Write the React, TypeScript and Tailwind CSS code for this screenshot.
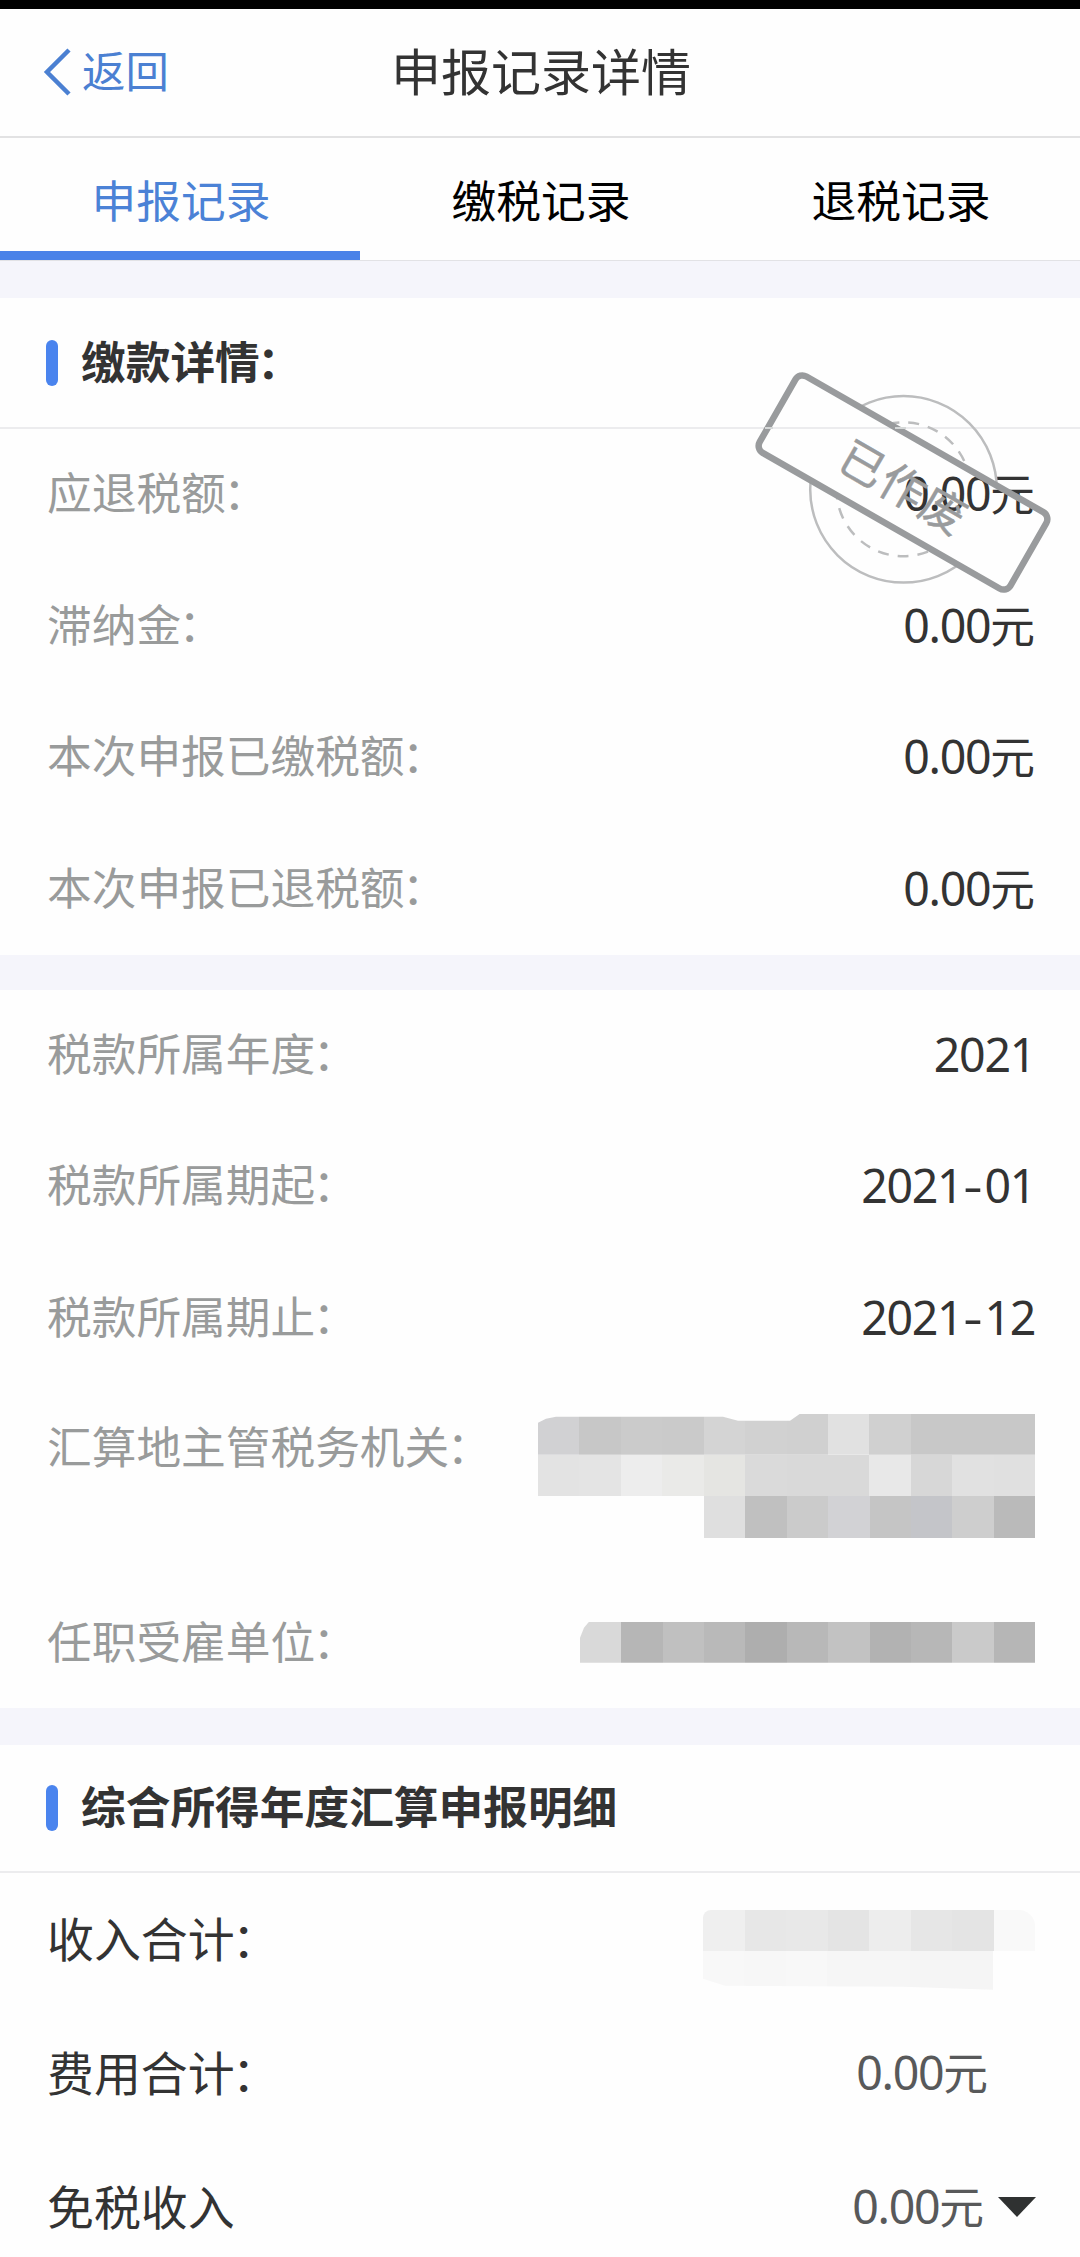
import { FC, ReactNode } from "react";
import clsx from "clsx";

const tabs = ["申报记录", "缴税记录", "退税记录"];

const payRows = ["应退税额：", "滞纳金：", "本次申报已缴税额：", "本次申报已退税额："];

const officeTop = ["#d1d1d3", "#c7c7c7", "#cbcbcb", "#cacaca", "#d4d4d4", "#d1d1d1", "#d0d0d0", "#e1e1e1", "#d0d0d0", "#c8c8c8", "#c8c8c8", "#c8c8c8"];
const officeMid = ["#e3e3e3", "#e4e4e4", "#ededed", "#eaeae8", "#e5e5e2", "#dadada", "#d9d9d9", "#d9d9d9", "#e8e8e8", "#d7d7d7", "#e1e1e1", "#e0e0e0"];
const officeLow = ["#dfdfdf", "#c0c0c0", "#cbcbcb", "#d2d2d5", "#c5c5c5", "#c4c5c9", "#cecece", "#bababa"];
const employer = ["#d9d9d9", "#b6b6b6", "#c0c0c0", "#b9b9b9", "#aeaeae", "#b8b8b8", "#c2c2c2", "#b2b2b2", "#b7b7b7", "#cacaca", "#b6b6b6"];
const incomeTop = ["#efefef", "#e7e7e7", "#e8e8e8", "#e4e4e4", "#ededed", "#e6e6e6", "#e4e4e4", "#f9f9f9"];
const incomeLow = ["#f8f8f8", "#f7f7f7", "#f8f8f8", "#f6f6f6", "#f6f6f6", "#f5f5f5", "#f5f5f5"];

const Mosaic: FC<{ colors: string[]; className?: string }> = ({
  colors,
  className,
}) => (
  <div className={clsx("flex", className)}>
    {colors.map((color, i) => (
      <div key={i} className="flex-1" style={{ backgroundColor: color }} />
    ))}
  </div>
);

// the last character and its colon are set a little tighter
const Label: FC<{ text: string; className?: string }> = ({
  text,
  className = "text-[#999b9b]",
}) => (
  <span className={className}>
    {text.endsWith("：") ? (
      <>
        {text.slice(0, -2)}
        <span className="tracking-[-2.5px]">{text.slice(-2)}</span>
      </>
    ) : (
      text
    )}
  </span>
);

const Digits: FC<{ children: ReactNode }> = ({ children }) => (
  <span className="text-[46.5px] tracking-[-1.3px]">{children}</span>
);

const Amount: FC<{ className?: string }> = ({ className }) => (
  <span className={className}>
    <Digits>0.00</Digits>元
  </span>
);

const Row: FC<{ label: string; children: ReactNode }> = ({
  label,
  children,
}) => (
  <div className="flex h-[131.4px] items-center justify-between pr-[45px] pb-[2px] pl-[47px]">
    <Label text={label} />
    {children}
  </div>
);

const SectionTitle: FC<{ title: string; className?: string }> = ({
  title,
  className,
}) => (
  <div
    className={clsx(
      "flex items-center gap-[23px] border-b-2 border-[#ececee] pl-[46px]",
      className
    )}
  >
    <div className="h-[46px] w-3 rounded-md bg-[#4a84ee]" />
    <h2 className="font-bold">
      <Label text={title} className="text-[#333]" />
    </h2>
  </div>
);

const Period: FC<{ year: string; month: string }> = ({ year, month }) => (
  <span className="flex items-center">
    <Digits>{year}</Digits>
    <span className="w-[22px] scale-x-[1.35] text-center">-</span>
    <Digits>{month}</Digits>
  </span>
);

const Gap: FC<{ className: string }> = ({ className }) => (
  <div className={clsx("bg-[#f5f5fb]", className)} />
);

const Stamp = () => (
  <svg
    className="absolute top-[60px] left-[744px]"
    width="320"
    height="250"
    viewBox="744 358 320 250"
    fill="none"
  >
    <defs>
      <mask id="outside-frame">
        <rect x="744" y="358" width="320" height="250" fill="white" />
        <rect
          x="758.5"
          y="438.5"
          width="289"
          height="88"
          transform="rotate(29.8 903 482.5)"
          fill="black"
        />
      </mask>
    </defs>
    <g mask="url(#outside-frame)" stroke="#bcbdbe">
      <circle cx="903.5" cy="489.3" r="93.3" strokeWidth="2.5" />
      <circle
        cx="903.5"
        cy="489.3"
        r="67"
        strokeWidth="2.5"
        strokeDasharray="11 9"
      />
    </g>
    <rect
      x="758.5"
      y="438.5"
      width="289"
      height="88"
      rx="8"
      transform="rotate(29.8 903 482.5)"
      stroke="#999b9d"
      strokeWidth="6.5"
    />
    <path d="M765 428h8M895 428h11" stroke="#d5d8d8" strokeWidth="2" />
    <text
      x="903"
      y="504"
      textAnchor="middle"
      fontSize="45"
      letterSpacing="1.5"
      transform="rotate(30 903 488.7)"
      fill="#999b9d"
      stroke="#999b9d"
      strokeWidth="0.5"
    >
      已作废
    </text>
  </svg>
);

const App = () => {
  return (
    <div className="h-[2257px] w-[1080px] overflow-hidden bg-[#fefefe] font-['Noto_Sans','Noto_Sans_CJK_SC',sans-serif] text-[44.7px] leading-none whitespace-nowrap text-[#333]">
      <div className="h-[9px] bg-black" />
      <header className="relative flex h-[129px] items-center justify-center border-b-2 border-[#e2e2e3] pb-[2px]">
        <button className="absolute left-[43px] flex items-center gap-[10px] text-[43.4px] text-[#4b80d2]">
          <svg width="29" height="48" viewBox="0 0 29 48" fill="none">
            <path d="M26 2L4 24L26 46" stroke="#4b80d2" strokeWidth="4.5" />
          </svg>
          返回
        </button>
        <h1 className="pl-[2px] text-[50px]">申报记录详情</h1>
      </header>

      <nav className="grid h-[123px] grid-cols-3 border-b border-[#e2e2e5] text-black">
        {tabs.map((tab, i) => (
          <div
            key={tab}
            className={clsx(
              "flex items-center justify-center border-b-9 pt-[13px] pl-[2px]",
              i === 0 ? "border-[#4a82e8] text-[#4b82d6]" : "border-transparent"
            )}
          >
            {tab}
          </div>
        ))}
      </nav>
      <Gap className="h-[37px]" />

      <section className="relative">
        <SectionTitle title="缴款详情：" className="h-[131px]" />
        {payRows.map((label) => (
          <Row key={label} label={label}>
            <Amount />
          </Row>
        ))}
        <Stamp />
      </section>
      <Gap className="h-[35px]" />

      <section>
        <Row label="税款所属年度：">
          <Digits>2021</Digits>
        </Row>
        <Row label="税款所属期起：">
          <Period year="2021" month="01" />
        </Row>
        <Row label="税款所属期止：">
          <Period year="2021" month="12" />
        </Row>
        <div className="flex h-[193px] items-start justify-between pt-[30px] pr-[45px] pl-[47px]">
          <Label text="汇算地主管税务机关：" className="pt-[11px] text-[#999b9b]" />
          <div className="flex w-[497px] flex-col items-end">
            <Mosaic
              colors={officeTop}
              className="h-[41px] w-full [clip-path:polygon(0_9px,8px_5px,18px_3px,185px_3px,200px_7px,252px_7px,262px_0,100%_0,100%_100%,0_100%)]"
            />
            <Mosaic colors={officeMid} className="h-[41px] w-full" />
            <Mosaic colors={officeLow} className="h-[42px] w-[331px]" />
          </div>
        </div>
        <div className="flex h-[131px] items-center justify-between pr-[45px] pl-[47px]">
          <Label text="任职受雇单位：" />
          <Mosaic
            colors={employer}
            className="h-[41px] w-[455px] [clip-path:polygon(0_16px,4px_6px,9px_0,100%_0,100%_100%,0_100%)]"
          />
        </div>
      </section>
      <Gap className="h-[37px]" />

      <section>
        <SectionTitle
          title="综合所得年度汇算申报明细"
          className="h-[128px]"
        />
        <div className="flex h-[134px] items-center justify-between pr-[45px] pl-[47px]">
          <Label text="收入合计：" className="text-[46.9px]" />
          <div className="w-[332px] pt-[20px]">
            <Mosaic
              colors={incomeTop}
              className="h-[41px] overflow-hidden rounded-tl-lg rounded-tr-2xl"
            />
            <Mosaic
              colors={incomeLow}
              className="h-[39px] w-[290px] [clip-path:polygon(0_0,100%_0,100%_100%,200px_36px,22px_35px,0_28px)]"
            />
          </div>
        </div>
        <div className="flex h-[134px] items-center justify-between pr-[92px] pl-[47px]">
          <Label text="费用合计：" className="text-[46.9px]" />
          <Amount className="pb-[2px] text-[#58595a]" />
        </div>
        <div className="flex h-[134px] items-center justify-between pr-[44px] pb-[2px] pl-[47px]">
          <Label text="免税收入" className="pt-[2px] text-[46.9px]" />
          <span className="flex items-center gap-[14px] text-[#58595a]">
            <Amount />
            <svg width="38" height="20" viewBox="0 0 38 20">
              <path d="M0 0H38L19 20Z" fill="#2f3131" />
            </svg>
          </span>
        </div>
      </section>
    </div>
  );
};

export default App;
